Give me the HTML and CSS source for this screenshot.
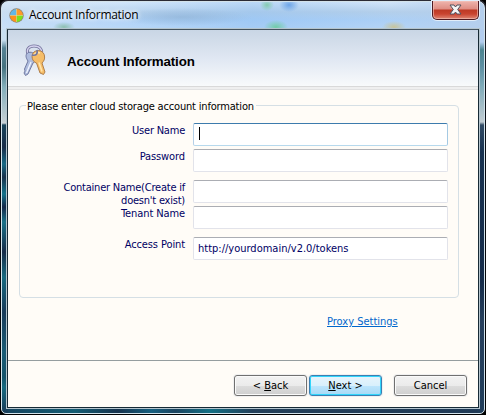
FILE: index.html
```html
<!DOCTYPE html>
<html lang="en">
<head>
<meta charset="utf-8">
<title>Account Information</title>
<link rel="stylesheet" href="styles.css">
</head>
<body>
<div class="window">
  <div class="glass">
    <header class="titlebar">
      <svg class="app-icon" width="15" height="15" viewBox="0 0 15 15">
        <circle cx="7.500" cy="7.500" r="7.200" fill="#8d8474"/>
        <path d="M7.500 7.500V1A6.500 6.500 0 0 0 1 7.500z" fill="#62b7e8"/>
        <path d="M7.500 7.500H14A6.500 6.500 0 0 0 7.500 1z" fill="#ff9a2a"/>
        <path d="M7.500 7.500H1A6.500 6.500 0 0 0 7.500 14z" fill="#ff921c"/>
        <path d="M7.500 7.500V14A6.500 6.500 0 0 0 14 7.500z" fill="#7fe01c"/>
        <path d="M7.500 1v13M1 7.500h13" stroke="#f3e8a0" stroke-width=".5"/>
      </svg>
      <span class="caption">Account Information</span>
      <button class="close" aria-label="Close">
        <svg width="13" height="11" viewBox="0 0 13 11">
          <path d="M1 1h4l1.500 2L8 1h4L8.700 5.500 12 10H8L6.500 8 5 10H1l3.300-4.500z" fill="#f5f5f5" stroke="#50505c" stroke-width="1"/>
        </svg>
      </button>
    </header>
    <main class="client">
      <div class="banner">
        <svg class="keys" width="24" height="34" viewBox="0 0 24 34">
          <path d="M5 10C3 5 6 2 11 2c6 0 9 4 7 9" fill="none" stroke="#77779f" stroke-width="3"/>
          <path d="M5 10C3 5 6 2 11 2c6 0 9 4 7 9" fill="none" stroke="#d5d2ee" stroke-width="1.300"/>
          <path d="M4.500 9c3-2 8 0 8.500 4 0 3-1 5-3 6L5 30l-2.500 1.500L1 29l1-2-.5-2L5 17c-2-3-3-6-.5-8z" fill="#aebcde" stroke="#666f98" stroke-width=".9"/>
          <path d="M8 18L3.500 29" stroke="#f0f4ff" stroke-width="1.300"/>
          <path d="M11 8c4-3 10-1 10.500 4 .5 3-.5 5-2.500 7l3 9-1.500 2.500L17 29l-3.500-10C9 18 7.500 11 11 8z" fill="#f5bd68" stroke="#a87642" stroke-width=".9"/>
          <path d="M11 12c0-3 4-4 6-3M16 18.500l3 9" fill="none" stroke="#ffe4ad" stroke-width="1.600"/>
          <path d="M9 11c4 1 6-1 5-5" fill="none" stroke="#74779d" stroke-width="1.700"/>
        </svg>
        <h1>Account Information</h1>
      </div>
      <div class="page">
        <fieldset>
          <legend>Please enter cloud storage account information</legend>
          <div class="row"><label class="tight">User Name</label><div class="field focused"><i class="caret"></i></div></div>
          <div class="row"><label>Password</label><div class="field"></div></div>
          <div class="row gap"><label class="tight">Container Name(Create if<br>doesn't exist)</label><div class="field"></div></div>
          <div class="row"><label>Tenant Name</label><div class="field"></div></div>
          <div class="row gap"><label>Access Point</label><div class="field"><span class="value">http://yourdomain/v2.0/tokens</span></div></div>
        </fieldset>
        <a class="proxy" href="#">Proxy Settings</a>
      </div>
      <footer>
        <button class="btn back">&lt; <u>B</u>ack</button>
        <button class="btn next"><u>N</u>ext &gt;</button>
        <button class="btn cancel">Cancel</button>
      </footer>
    </main>
  </div>
</div>
</body>
</html>
```
FILE: styles.css
```css
* { box-sizing: border-box; }
body {
  margin: 0;
  background: #000;
  font: 11px/13px "DejaVu Sans Condensed", "DejaVu Sans", sans-serif;
  font-stretch: condensed;
}
.window {
  width: 486px;
  height: 415px;
  padding: 1px;
  background: linear-gradient(#2b2b35, #0b1018 20%, #000);
  border-radius: 7px 7px 6px 6px;
}
.glass {
  height: 413px;
  padding: 0 5px 4px 4px;
  border: 1px solid #d3e2ea;
  border-radius: 7px 7px 5px 5px;
  background:
    radial-gradient(ellipse 7px 6px at 22px 3px, #84cbb0, transparent) 243px 0 / 230px 27px no-repeat,
    radial-gradient(ellipse 10px 7px at 44px 3px, #6da5e8, transparent) 243px 0 / 230px 27px no-repeat,
    radial-gradient(ellipse 12px 7px at 31px 25px, #71cda7, transparent) 243px 0 / 230px 27px no-repeat,
    radial-gradient(ellipse 12px 6px at 149px 25px, #c7c49b, transparent) 243px 0 / 230px 27px no-repeat,
    radial-gradient(ellipse 11px 5px at 62px 25px, #8dbfb0, transparent) 0 0 / 230px 27px no-repeat,
    radial-gradient(ellipse 70px 9px at 180px 15px, #8baed199, transparent) 0 0 / 300px 27px no-repeat,
    linear-gradient(90deg, #d5e5f5aa, #c5dff855 25%, #8fbff066 52%, #b5d2ef33 80%, #b5cfed) 0 0 / 100% 27px no-repeat,
    linear-gradient(#d8e9fc, #b3cee9 10px, #a9cff8 18px, #b5d5f8 27px) 0 0 / 100% 27px no-repeat,
    linear-gradient(#c9dff0 0 38px, #568294 46px, #45717f 65px, #83aeba 85px, #c4cfd4 120px, #d0d5da 121px, #17435a 123px, #192c48 145px, #176985 162px, #18314b 175px, #14728a 192px, #15294a 205px, #1a7188 220px, #162b48 250px, #176a80 275px, #183b5a 310px, #195c76 350px, #15536b 375px, #176a80 385px, #183b58) 0 0 / 6px 100% no-repeat,
    linear-gradient(#b3cdee 0 40px, #4c8490 48px, #5d8fa2 64px, #7fabb9 84px, #c1ccd2 120px, #314b65 123px, #183250 150px, #152c4a 280px, #27405d 320px, #203d5a) 100% 0 / 6px 100% no-repeat,
    linear-gradient(90deg, #17435e, #145d74 15%, #17334e 24%, #176080 31%, #1c4460 36%, #147085 43%, #24405a 52%, #203a56);
}
.titlebar {
  display: flex;
  height: 26px;
  padding-left: 3px;
}
.app-icon { margin-top: 6px; }
.caption {
  width: 110px;
  margin: 5px 0 0 5px;
  color: #000;
  font: 12px/16px "Open Sans", "Noto Sans", sans-serif;
  letter-spacing: -.3px;
  white-space: nowrap;
  text-shadow: 0 0 6px #fff, 0 0 4px #fff;
}
.close {
  display: flex;
  justify-content: center;
  width: 47px;
  height: 19px;
  margin: -1px 0 0 auto;
  padding: 3px 0 0;
  border: 1px solid #511b22;
  border-top: 0;
  border-radius: 0 0 5px 5px;
  background: linear-gradient(#efb5ad, #df8d83 8px, #bd3925 9px, #c94430 13px, #df8775);
  box-shadow: inset 0 0 0 1px #f3c5bd99, 0 0 0 1px #e2eefa;
}
.client {
  display: flex;
  flex-direction: column;
  width: 472px;
  height: 379px;
  margin: 1px 0 0 1px;
  border: 1px solid #172a35;
  border-top-color: #44535e;
  background: #fffcf7;
  box-shadow: 0 0 0 1px #b5c5ce;
}
.banner {
  display: flex;
  flex: 0 0 60px;
  border-bottom: 1px solid #e2e2e2;
  background: linear-gradient(#c9d6e5, #e1e8f3 30px, #f8fafb 56px, #d9d9d9 56px 57px, #efefef 57px);
}
.keys { width: 24px; margin: 14px 0 0 15px; }
h1 {
  margin: 24px 0 0 20px;
  font: bold 13.33px/16px "Liberation Sans", Arial, sans-serif;
  letter-spacing: -.14px;
  white-space: nowrap;
}
.page { flex: 1; padding: 9px 19px 0 11px; }
fieldset {
  width: 440px;
  height: 199px;
  min-width: 0;
  margin: 0;
  padding: 11px 10px 0;
  border: 1px solid #d5dfe5;
  border-radius: 4px;
}
legend {
  width: 230px;
  height: 13px;
  margin-left: -4px;
  padding: 1px 1px 0;
  letter-spacing: -.18px;
  white-space: nowrap;
}
.row {
  display: flex;
  justify-content: flex-end;
  height: 23px;
  margin-bottom: 3px;
  color: #000064;
}
.row.gap { margin-top: 8px; }
label {
  margin: 1px 8px 0 0;
  letter-spacing: -.1px;
  text-align: right;
  white-space: nowrap;
}
.tight { letter-spacing: -.22px; }
.field {
  display: flex;
  align-items: flex-start;
  width: 255px;
  height: 23px;
  padding: 4px 4px 0;
  border: 1px solid #e2e3ea;
  border-top-color: #abadb3;
  border-radius: 2px;
  background: #fff;
}
.focused { border-color: #3d7bad #a4c9e3 #b7d9ed #b5cfe7; }
.caret { width: 1px; height: 13px; margin: -1px 0 0 1px; background: #000; }
.proxy {
  display: block;
  width: 71px;
  margin: 17px 61px 0 auto;
  color: #0066cc;
  white-space: nowrap;
}
footer {
  display: flex;
  flex: 0 0 47px;
  padding: 14px 0 0 226px;
  border-top: 1px solid #959d9f;
}
.btn {
  width: 73px;
  height: 21px;
  margin: 0 2px 0 0;
  padding: 0;
  border: 1px solid #707070;
  border-radius: 3px;
  background: linear-gradient(#f2f2f2, #ebebeb 50%, #dddddd 50%, #cfcfcf);
  box-shadow: inset 0 0 0 1px #fafafa, 0 0 0 1px #f0f0f0;
  color: #000;
  font: inherit;
  line-height: 17px;
}
.btn u { text-underline-offset: 1px; }
.next {
  border-color: #3c7fb1;
  background: linear-gradient(#e8f5fc, #d9f0fc 50%, #bee6fd 50%, #a7d9f5);
  box-shadow: inset 0 0 0 1px #31d5fb, 0 0 0 1px #f0f0f0;
}
.cancel { margin-left: 10px; }
```
